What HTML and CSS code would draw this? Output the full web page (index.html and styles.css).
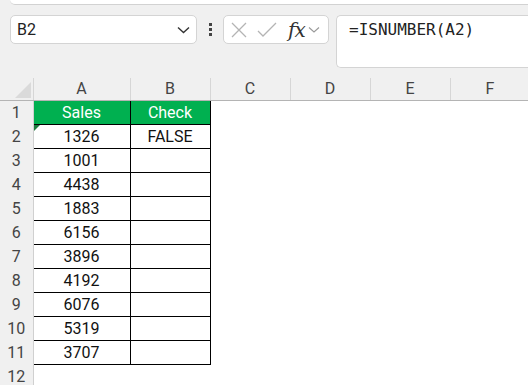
FILE: index.html
```html
<!DOCTYPE html>
<html lang="en">
<head>
    <meta charset="UTF-8">
    <meta name="viewport" content="width=device-width, initial-scale=1.0">
    <title>ISNUMBER check</title>
    <link rel="stylesheet" href="styles.css">
</head>
<body>

    <div class="topbar"></div>

    <div class="formula-row">
        <div class="namebox">
            <span>B2</span>
            <svg class="chevron" width="13" height="8" viewBox="0 0 13 8"><path d="M1 1.5 L6.5 6.5 L12 1.5" fill="none" stroke="#333" stroke-width="1.4"/></svg>
        </div>
        <div class="dots"><i></i><i></i><i></i></div>
        <div class="fn-buttons">
            <svg width="18" height="16" viewBox="0 0 18 16"><path d="M2 1 L16 15 M16 1 L2 15" stroke="#b4b4b4" stroke-width="1.3" fill="none"/></svg>
            <svg width="20" height="16" viewBox="0 0 20 16"><path d="M1 9 L6 14 L19 1" stroke="#b4b4b4" stroke-width="1.3" fill="none"/></svg>
            <span class="fx">fx</span>
            <svg width="12" height="8" viewBox="0 0 12 8"><path d="M1 1.5 L6 6 L11 1.5" fill="none" stroke="#999" stroke-width="1.1"/></svg>
        </div>
        <div class="formula-input">=ISNUMBER(A2)</div>
    </div>

    <table class="sheet">
        <colgroup>
            <col style="width: 33px">
            <col style="width: 97px">
            <col style="width: 80px">
            <col style="width: 80px">
            <col style="width: 80px">
            <col style="width: 80px">
            <col style="width: 80px">
        </colgroup>
        <tr class="col-heads">
            <th class="corner"><span class="tri"></span></th>
            <th>A</th><th>B</th><th>C</th><th>D</th><th>E</th><th>F</th>
        </tr>
        <tr>
            <th class="rn">1</th>
            <td class="box head">Sales</td><td class="box head">Check</td>
            <td></td><td></td><td></td><td></td>
        </tr>
        <tr>
            <th class="rn">2</th>
            <td class="box flag">1326</td><td class="box">FALSE</td>
            <td></td><td></td><td></td><td></td>
        </tr>
        <tr><th class="rn">3</th><td class="box">1001</td><td class="box"></td><td></td><td></td><td></td><td></td></tr>
        <tr><th class="rn">4</th><td class="box">4438</td><td class="box"></td><td></td><td></td><td></td><td></td></tr>
        <tr><th class="rn">5</th><td class="box">1883</td><td class="box"></td><td></td><td></td><td></td><td></td></tr>
        <tr><th class="rn">6</th><td class="box">6156</td><td class="box"></td><td></td><td></td><td></td><td></td></tr>
        <tr><th class="rn">7</th><td class="box">3896</td><td class="box"></td><td></td><td></td><td></td><td></td></tr>
        <tr><th class="rn">8</th><td class="box">4192</td><td class="box"></td><td></td><td></td><td></td><td></td></tr>
        <tr><th class="rn">9</th><td class="box">6076</td><td class="box"></td><td></td><td></td><td></td><td></td></tr>
        <tr><th class="rn">10</th><td class="box">5319</td><td class="box"></td><td></td><td></td><td></td><td></td></tr>
        <tr><th class="rn">11</th><td class="box">3707</td><td class="box"></td><td></td><td></td><td></td><td></td></tr>
        <tr><th class="rn">12</th><td></td><td></td><td></td><td></td><td></td><td></td></tr>
    </table>

</body>
</html>
```

FILE: styles.css
```css
body {
    margin: 0;
    background-color: #f0f0f0;
    font-family: Roboto, "Liberation Sans", sans-serif;
    overflow: hidden;
    width: 528px;
    height: 385px;
}
.topbar {
    height: 4px;
    margin-left: 10px;
    background-color: #ffffff;
    border-bottom: 1px solid #d2d2d2;
    border-radius: 0 0 0 6px;
}
.formula-row {
    display: flex;
    align-items: flex-start;
    margin-top: 10px;
    height: 53px;
}
.namebox {
    box-sizing: border-box;
    margin-left: 10px;
    width: 187px;
    height: 29px;
    background-color: #ffffff;
    border: 1px solid #d4d4d4;
    border-radius: 5px;
    display: flex;
    align-items: center;
    justify-content: space-between;
    padding: 0 6px 0 6px;
    font-size: 16px;
    color: #222;
}
.dots {
    width: 26px;
    height: 29px;
    display: flex;
    flex-direction: column;
    align-items: center;
    justify-content: center;
    gap: 2px;
}
.dots i {
    display: block;
    width: 3px;
    height: 3px;
    background-color: #444;
}
.fn-buttons {
    box-sizing: border-box;
    width: 106px;
    height: 29px;
    background-color: #ffffff;
    border: 1px solid #d4d4d4;
    border-radius: 5px;
    display: flex;
    align-items: center;
    padding-left: 6px;
    gap: 9px;
}
.fx {
    font-family: "DejaVu Serif", serif;
    font-style: italic;
    font-size: 20px;
    color: #333;
    margin-left: 2px;
    margin-right: -6px;
    line-height: 1;
    letter-spacing: -1px;
}
.formula-input {
    box-sizing: border-box;
    flex: 1;
    margin-left: 7px;
    height: 53px;
    background-color: #ffffff;
    border: 1px solid #d4d4d4;
    border-right: none;
    border-radius: 5px 0 0 5px;
    padding: 4px 0 0 12px;
    font-family: "DejaVu Sans Mono", monospace;
    font-size: 16px;
    color: #222;
}
.sheet {
    margin-top: 10px;
    border-collapse: collapse;
    table-layout: fixed;
    width: 530px;
    background-color: #ffffff;
    font-size: 16px;
}
.sheet tr {
    height: 24px;
}
.sheet td {
    padding: 0;
    text-align: center;
    color: #111;
}
.col-heads {
    height: 22px !important;
}
.col-heads th {
    background-color: #f0f0f0;
    font-weight: normal;
    font-size: 16px;
    color: #444;
    border-right: 1px solid #d6d6d6;
    border-bottom: 1px solid #b4b4b4;
    padding: 0;
}
.corner {
    position: relative;
}
.tri {
    position: absolute;
    right: 2px;
    bottom: 2px;
    width: 0;
    height: 0;
    border-left: 16px solid transparent;
    border-bottom: 16px solid #dadada;
}
.rn {
    background-color: #f0f0f0;
    font-weight: normal;
    font-size: 16px;
    color: #444;
    border-right: 1px solid #d0d0d0;
    padding: 0;
}
.box {
    border: 1px solid #000000;
}
.head {
    background-color: #00b050;
    color: #ffffff !important;
}
.flag {
    position: relative;
}
.flag::before {
    content: "";
    position: absolute;
    left: 0;
    top: 0;
    border-top: 6px solid #1d7a3e;
    border-right: 6px solid transparent;
}
```
